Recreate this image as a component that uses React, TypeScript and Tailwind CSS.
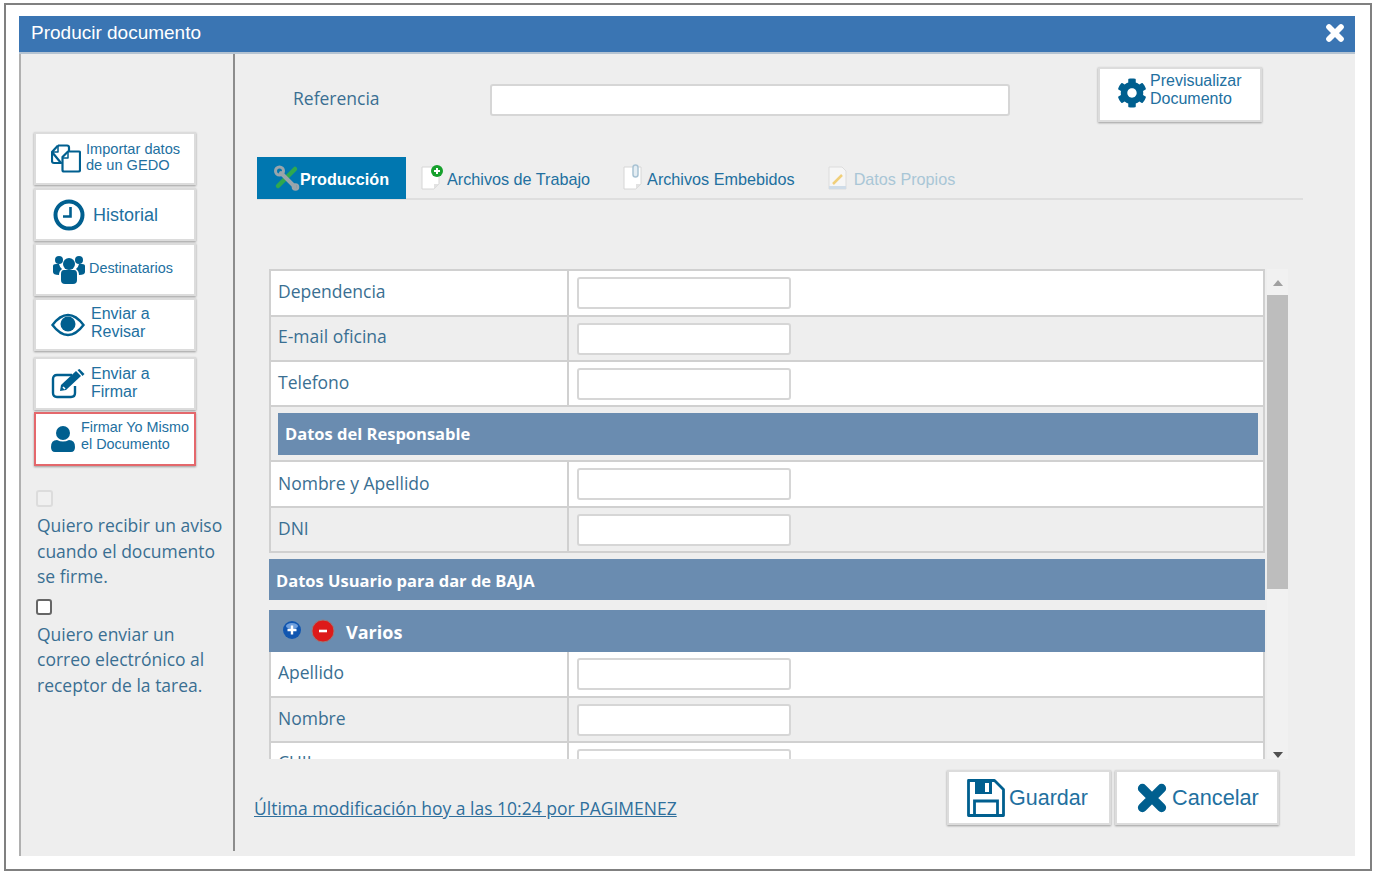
import { FaCog } from 'react-icons/fa';
import type { ReactNode } from 'react';

const BLUE = '#005f8f';
const sans = "font-['Liberation_Sans',Arial,sans-serif]";
const open = "font-['Open_Sans',sans-serif]";

function SideButton({
  icon,
  className,
  children,
}: {
  icon: ReactNode;
  className: string;
  children: ReactNode;
}) {
  return (
    <button
      className={`flex w-[162px] items-center border-2 bg-white shadow-[0_1px_2px_rgba(0,0,0,0.35)] ${sans} text-[#22709f] ${className}`}
    >
      {icon}
      {children}
    </button>
  );
}

function PageIcon({ children }: { children?: ReactNode }) {
  return (
    <svg width="24" height="26" viewBox="0 0 24 26" className="shrink-0">
      <path d="M1 3h17v17l-5 5H1z" fill="#fff" stroke="#d6d6d6" />
      <path d="M18 20l-5 5v-5z" fill="#e2e2e2" />
      {children}
    </svg>
  );
}

function CrossIcon({ size, color }: { size: number; color: string }) {
  return (
    <svg width={size} height={size} viewBox="0 0 30 30" className="shrink-0">
      <path d="M6 6L24 24M24 6L6 24" stroke={color} strokeWidth="8.5" strokeLinecap="round" />
    </svg>
  );
}

function Row({ label, alt, className, low }: { label: string; alt?: boolean; className: string; low?: boolean }) {
  return (
    <div className={`flex shrink-0 border-b-2 border-[#d0d0d0] ${alt ? 'bg-[#eeeeee]' : 'bg-white'} ${className}`}>
      <div className={`flex w-[298px] items-center border-r-2 border-[#d0d0d0] pl-[7px] text-[17.5px] text-[#3a6f92] ${low ? 'pb-[2px]' : 'pb-1'} ${open}`}>
        {label}
      </div>
      <div className="flex items-center pl-2">
        <input className="h-[32px] w-[214px] rounded-[3px] border-2 border-[#d6d6d6] bg-white" />
      </div>
    </div>
  );
}

function Band({ children, className }: { children: ReactNode; className: string }) {
  return (
    <div className={`flex items-center bg-[#6a8cb0] font-bold text-white ${open} ${className}`}>{children}</div>
  );
}

export default function App() {
  return (
    <div className="h-[877px] w-[1378px] overflow-hidden bg-white">
      <div className="ml-1 mt-[3px] h-[868px] w-[1368px] border-2 border-[#808080] px-[13px] pt-[11px]">
        <div className="flex h-[840px] w-[1336px] flex-col bg-[#eeeeee]">
          {/* title */}
          <div className={`flex h-[38px] shrink-0 items-center justify-between border-b-2 border-[#b4c3d2] bg-[#3a75b3] pb-[2px] pl-3 pr-[10px] text-[19px] text-white ${sans}`}>
            <span>Producir documento</span>
            <CrossIcon size={20} color="#fff" />
          </div>

          <div className="flex min-h-0 flex-1 border-l-2 border-[#b0b0b0]">
            {/* left column */}
            <aside className="flex h-[797px] w-[214px] shrink-0 flex-col border-r-2 border-[#8c8c8c] pl-[13px] pt-[78px]">
              <SideButton
                className="h-[53px] border-[#dcdcdc] pl-[15px] text-[14.6px] leading-[16px]"
                icon={
                  <svg width="30" height="29" viewBox="0 0 30 29" fill="none" stroke={BLUE} strokeWidth="2.2" strokeLinejoin="round" className="mr-[5px] shrink-0">
                    <path d="M7 1.500h9a2 2 0 0 1 2 2V7" />
                    <path d="M10 19H3a2 2 0 0 1-2-2V8z" />
                    <path d="M7 2v6H1.500" strokeWidth="1.500" />
                    <path d="M7 1.500L1 8" />
                    <path d="M17 7.500h11a1 1 0 0 1 1 1V26a1.500 1.500 0 0 1-1.500 1.500H13a1.500 1.500 0 0 1-1.500-1.500V13z" fill="#fff" />
                    <path d="M17 8v6h-5.500" strokeWidth="1.500" />
                  </svg>
                }
              >
                <span className="pb-[3px] text-left">Importar datos<br />de un GEDO</span>
              </SideButton>
              <SideButton
                className="mt-[3px] h-[53px] border-[#dcdcdc] pl-[17px] text-[18px]"
                icon={
                  <svg width="32" height="32" viewBox="0 0 32 32" fill="none" stroke={BLUE} className="mr-[8px] shrink-0">
                    <circle cx="16" cy="16" r="13.5" strokeWidth="4" />
                    <path d="M17.5 8v9.5H10" strokeWidth="2.600" />
                  </svg>
                }
              >
                <span className="pt-[1px]">Historial</span>
              </SideButton>
              <SideButton
                className="mt-[2px] h-[53px] border-[#dcdcdc] pl-[17px] text-[14.4px]"
                icon={
                  <svg width="32" height="30" viewBox="0 0 32 30" fill={BLUE} className="mr-[4px] shrink-0">
                    <circle cx="6" cy="5" r="4" />
                    <circle cx="26" cy="5" r="4" />
                    <path d="M0 11q0-2 3-2h3q1 4 3 5-3 2-3 6-6 0-6-3zM32 11q0-2-3-2h-3q-1 4-3 5 3 2 3 6 6 0 6-3z" />
                    <circle cx="16" cy="9" r="6" />
                    <path d="M8 19q0-4 3-4h10q3 0 3 4v6q0 4-4 4h-8q-4 0-4-4z" />
                  </svg>
                }
              >
                <span className="pb-[1px]">Destinatarios</span>
              </SideButton>
              <SideButton
                className="mt-[2px] h-[53px] border-[#dcdcdc] pl-[15px] text-[16px] leading-[18px]"
                icon={
                  <svg width="34" height="24" viewBox="0 0 34 24" className="mr-[6px] shrink-0">
                    <path d="M1.5 12Q9 2 17 2t15.500 10Q25 22 17 22T1.500 12z" fill="none" stroke={BLUE} strokeWidth="2.400" />
                    <circle cx="17" cy="11" r="7.500" fill={BLUE} />
                  </svg>
                }
              >
                <span className="pb-[3px] text-left">Enviar a<br />Revisar</span>
              </SideButton>
              <SideButton
                className="mt-[6px] h-[53px] border-[#dcdcdc] pl-[15px] text-[16px] leading-[18px]"
                icon={
                  <svg width="34" height="30" viewBox="0 0 34 30" className="mr-[6px] shrink-0">
                    <path d="M24 17v7q0 4-4 4H6q-4 0-4-4V10q0-4 4-4h15" fill="none" stroke={BLUE} strokeWidth="2.400" />
                    <path d="M9 22l1-6L25 2l5 5-15 14z" fill={BLUE} />
                    <path d="M26.500 1l2-1 5 5-2 2z" fill={BLUE} />
                    <path d="M12 18l2 2" stroke="#fff" strokeWidth="1.600" />
                  </svg>
                }
              >
                <span className="pb-[1px] text-left">Enviar a<br />Firmar</span>
              </SideButton>
              <SideButton
                className="mt-[2px] h-[54px] border-[#e4686c] pl-[15px] text-[14.4px] leading-[17px]"
                icon={
                  <svg width="24" height="26" viewBox="0 0 24 26" fill={BLUE} className="mr-[6px] shrink-0">
                    <circle cx="12" cy="7" r="7" />
                    <path d="M0 21q0-7 6-7 6 3 12 0 6 0 6 7 0 5-4 5H4q-4 0-4-5z" />
                  </svg>
                }
              >
                <span className="pb-[7px] text-left">Firmar Yo Mismo<br />el Documento</span>
              </SideButton>

              <div className={`pl-[2px] text-[17.5px] leading-[25.5px] text-[#3a6f92] ${open}`}>
                <div className="mt-[24px] h-[17px] w-[17px] rounded-[3px] border-2 border-[#dcdcdc] bg-[#f0f0f0]" />
                <p className="ml-px mt-[6px] whitespace-nowrap">Quiero recibir un aviso<br />cuando el documento<br />se firme.</p>
                <input type="checkbox" className="mt-[9px] block h-[16px] w-[16px] appearance-none rounded-[3px] border-2 border-[#666] bg-white" />
                <p className="ml-px mt-[7px] whitespace-nowrap">Quiero enviar un<br />correo electrónico al<br />receptor de la tarea.</p>
              </div>
            </aside>

            {/* right column */}
            <main className="flex min-w-0 flex-1 flex-col pl-[22px]">
              <div className="flex h-[103px] shrink-0 items-start">
                <span className={`ml-[36px] mt-[31px] w-[197px] text-[17.5px] text-[#3a6f92] ${open}`}>Referencia</span>
                <input className="mt-[30px] h-[32px] w-[520px] rounded-[3px] border-2 border-[#d6d6d6] bg-white" />
                <button className={`ml-[88px] mt-[13px] flex h-[55px] w-[164px] items-center border-2 border-[#dcdcdc] bg-white pl-[17px] text-left text-[16px] leading-[18px] text-[#22709f] shadow-[0_1px_2px_rgba(0,0,0,0.35)] ${sans}`}>
                  <FaCog color={BLUE} className="mb-[4px] mr-[3px] h-[30px] w-[30px]" />
                  <span className="mb-[10px]">Previsualizar<br />Documento</span>
                </button>
              </div>

              {/* tabs */}
              <div className={`flex h-[43px] w-[1046px] shrink-0 items-center border-b-2 border-[#dedede] text-[16.2px] ${sans}`}>
                <div className="flex h-[42px] w-[149px] items-center bg-[#0077b0] pl-[16px] pt-[3px] font-bold text-white">
                  <svg width="27" height="27" viewBox="0 0 27 27" className="-mt-[3px] shrink-0">
                    <path d="M5 22L22 5" stroke="#2fa84f" strokeWidth="4.500" strokeLinecap="round" />
                    <path d="M8 9L22 23" stroke="#9aa5ab" strokeWidth="4" strokeLinecap="round" />
                    <circle cx="6.500" cy="7" r="4" fill="none" stroke="#9aa5ab" strokeWidth="3" />
                    <circle cx="22.500" cy="23" r="2.600" fill="none" stroke="#9aa5ab" strokeWidth="2.400" />
                  </svg>
                  Producción
                </div>
                <div className="ml-[15px] flex items-center text-[#22709f]">
                  <PageIcon>
                    <circle cx="16" cy="7" r="6" fill="#16a02c" />
                    <path d="M16 4v6M13 7h6" stroke="#fff" strokeWidth="2" />
                  </PageIcon>
                  <span className="ml-[2px] pt-[3px]">Archivos de Trabajo</span>
                </div>
                <div className="ml-[33px] flex items-center text-[#22709f]">
                  <PageIcon>
                    <rect x="10" y="1" width="5" height="12" rx="2.500" fill="#e4edf3" stroke="#a9c3d4" strokeWidth="1.500" />
                  </PageIcon>
                  <span className="pt-[3px]">Archivos Embebidos</span>
                </div>
                <div className="ml-[33px] flex items-center text-[#a9c6d6]">
                  <svg width="24" height="26" viewBox="0 0 24 26" className="shrink-0">
                    <path d="M1 3h13l4 4v18H1z" fill="#f6f6f6" stroke="#dcdcdc" />
                    <path d="M5 20L14 11" stroke="#f0cf7a" strokeWidth="2.500" />
                    <path d="M1 22h17v3H1z" fill="#cfdce8" />
                  </svg>
                  <span className="ml-[2px] pt-[3px]">Datos Propios</span>
                </div>
              </div>

              {/* form + scrollbar */}
              <div className="mt-[69px] flex h-[490px] shrink-0">
                <div className="ml-[12px] h-[490px] w-[996px] overflow-hidden">
                  <div className="flex flex-col border-x-2 border-t-2 border-[#d0d0d0]">
                    <Row className="h-[46px]" label="Dependencia" />
                    <Row className="h-[45px]" label="E-mail oficina" alt />
                    <Row className="h-[45px]" label="Telefono" low />
                    <div className="h-[55px] border-b-2 border-[#d0d0d0] bg-[#eeeeee] pl-[7px] pr-[5px] pt-[6px]">
                      <Band className="h-[42px] pl-[7px] text-[16.5px]">Datos del Responsable</Band>
                    </div>
                    <Row className="h-[46px]" label="Nombre y Apellido" low />
                    <Row className="h-[45px]" label="DNI" alt low />
                  </div>
                  <Band className="mt-[6px] h-[41px] pl-[7px] pt-[3px] text-[16.5px]">Datos Usuario para dar de BAJA</Band>
                  <Band className="mt-[10px] h-[42px] pl-[12px] text-[18px]">
                    <svg width="22" height="22" viewBox="0 0 22 22" className="shrink-0">
                      <circle cx="11" cy="10" r="9" fill="#1156b0" />
                      <ellipse cx="11" cy="6" rx="6" ry="3" fill="#6f9fdc" />
                      <path d="M11 5.500v9M6.500 10h9" stroke="#fff" strokeWidth="2.400" />
                    </svg>
                    <svg width="24" height="24" viewBox="0 0 24 24" className="ml-[8px] mr-[11px] shrink-0">
                      <circle cx="12" cy="12" r="11" fill="#dd1a1a" stroke="#9a7a7a" />
                      <path d="M8 12h8" stroke="#fff" strokeWidth="2.600" />
                    </svg>
                    <span className="pt-[3px]">Varios</span>
                  </Band>
                  <div className="flex flex-col border-x-2 border-[#d0d0d0]">
                    <Row className="h-[46px]" label="Apellido" />
                    <Row className="h-[45px]" label="Nombre" alt low />
                    <Row className="h-[45px]" label="CUIL" />
                  </div>
                </div>
                <div className="ml-[2px] flex h-[490px] w-[21px] flex-col items-center bg-[#f1f1f1]">
                  <div className="mt-[11px] h-0 w-0 border-x-[5px] border-b-[6px] border-x-transparent border-b-[#a0a0a0]" />
                  <div className="mt-[9px] h-[294px] w-[21px] bg-[#bdbdbd]" />
                  <div className="mb-[1px] mt-auto h-0 w-0 border-x-[5px] border-t-[6px] border-x-transparent border-t-[#505050]" />
                </div>
              </div>

              {/* bottom */}
              <div className="flex shrink-0 items-start">
                <a className={`ml-[-3px] mt-[36px] w-[693px] whitespace-nowrap text-[17.5px] text-[#2f6f9c] underline ${open}`}>
                  Última modificación hoy a las 10:24 por PAGIMENEZ
                </a>
                <button className={`mt-[11px] flex h-[55px] w-[164px] items-center border-2 border-[#dcdcdc] bg-white pl-[18px] text-[21.5px] text-[#22709f] shadow-[0_1px_2px_rgba(0,0,0,0.35)] ${sans}`}>
                  <svg width="38" height="38" viewBox="0 0 38 38" className="shrink-0">
                    <path d="M1.500 1.500h26l9 9v26h-35z" fill="none" stroke={BLUE} strokeWidth="2.800" strokeLinejoin="round" />
                    <path d="M8 2h17v13H8z" fill={BLUE} />
                    <path d="M18 4h4v9h-4z" fill="#fff" />
                    <path d="M7.500 36V22h23v14" fill="none" stroke={BLUE} strokeWidth="2.800" />
                  </svg>
                  <span className="ml-[4px] pt-[1px]">Guardar</span>
                </button>
                <button className={`ml-[4px] mt-[11px] flex h-[55px] w-[164px] items-center border-2 border-[#dcdcdc] bg-white pl-[19px] text-[21.7px] text-[#22709f] shadow-[0_1px_2px_rgba(0,0,0,0.35)] ${sans}`}>
                  <CrossIcon size={32} color={BLUE} />
                  <span className="ml-[4px] pt-[1px]">Cancelar</span>
                </button>
              </div>
            </main>
          </div>
        </div>
      </div>
    </div>
  );
}
